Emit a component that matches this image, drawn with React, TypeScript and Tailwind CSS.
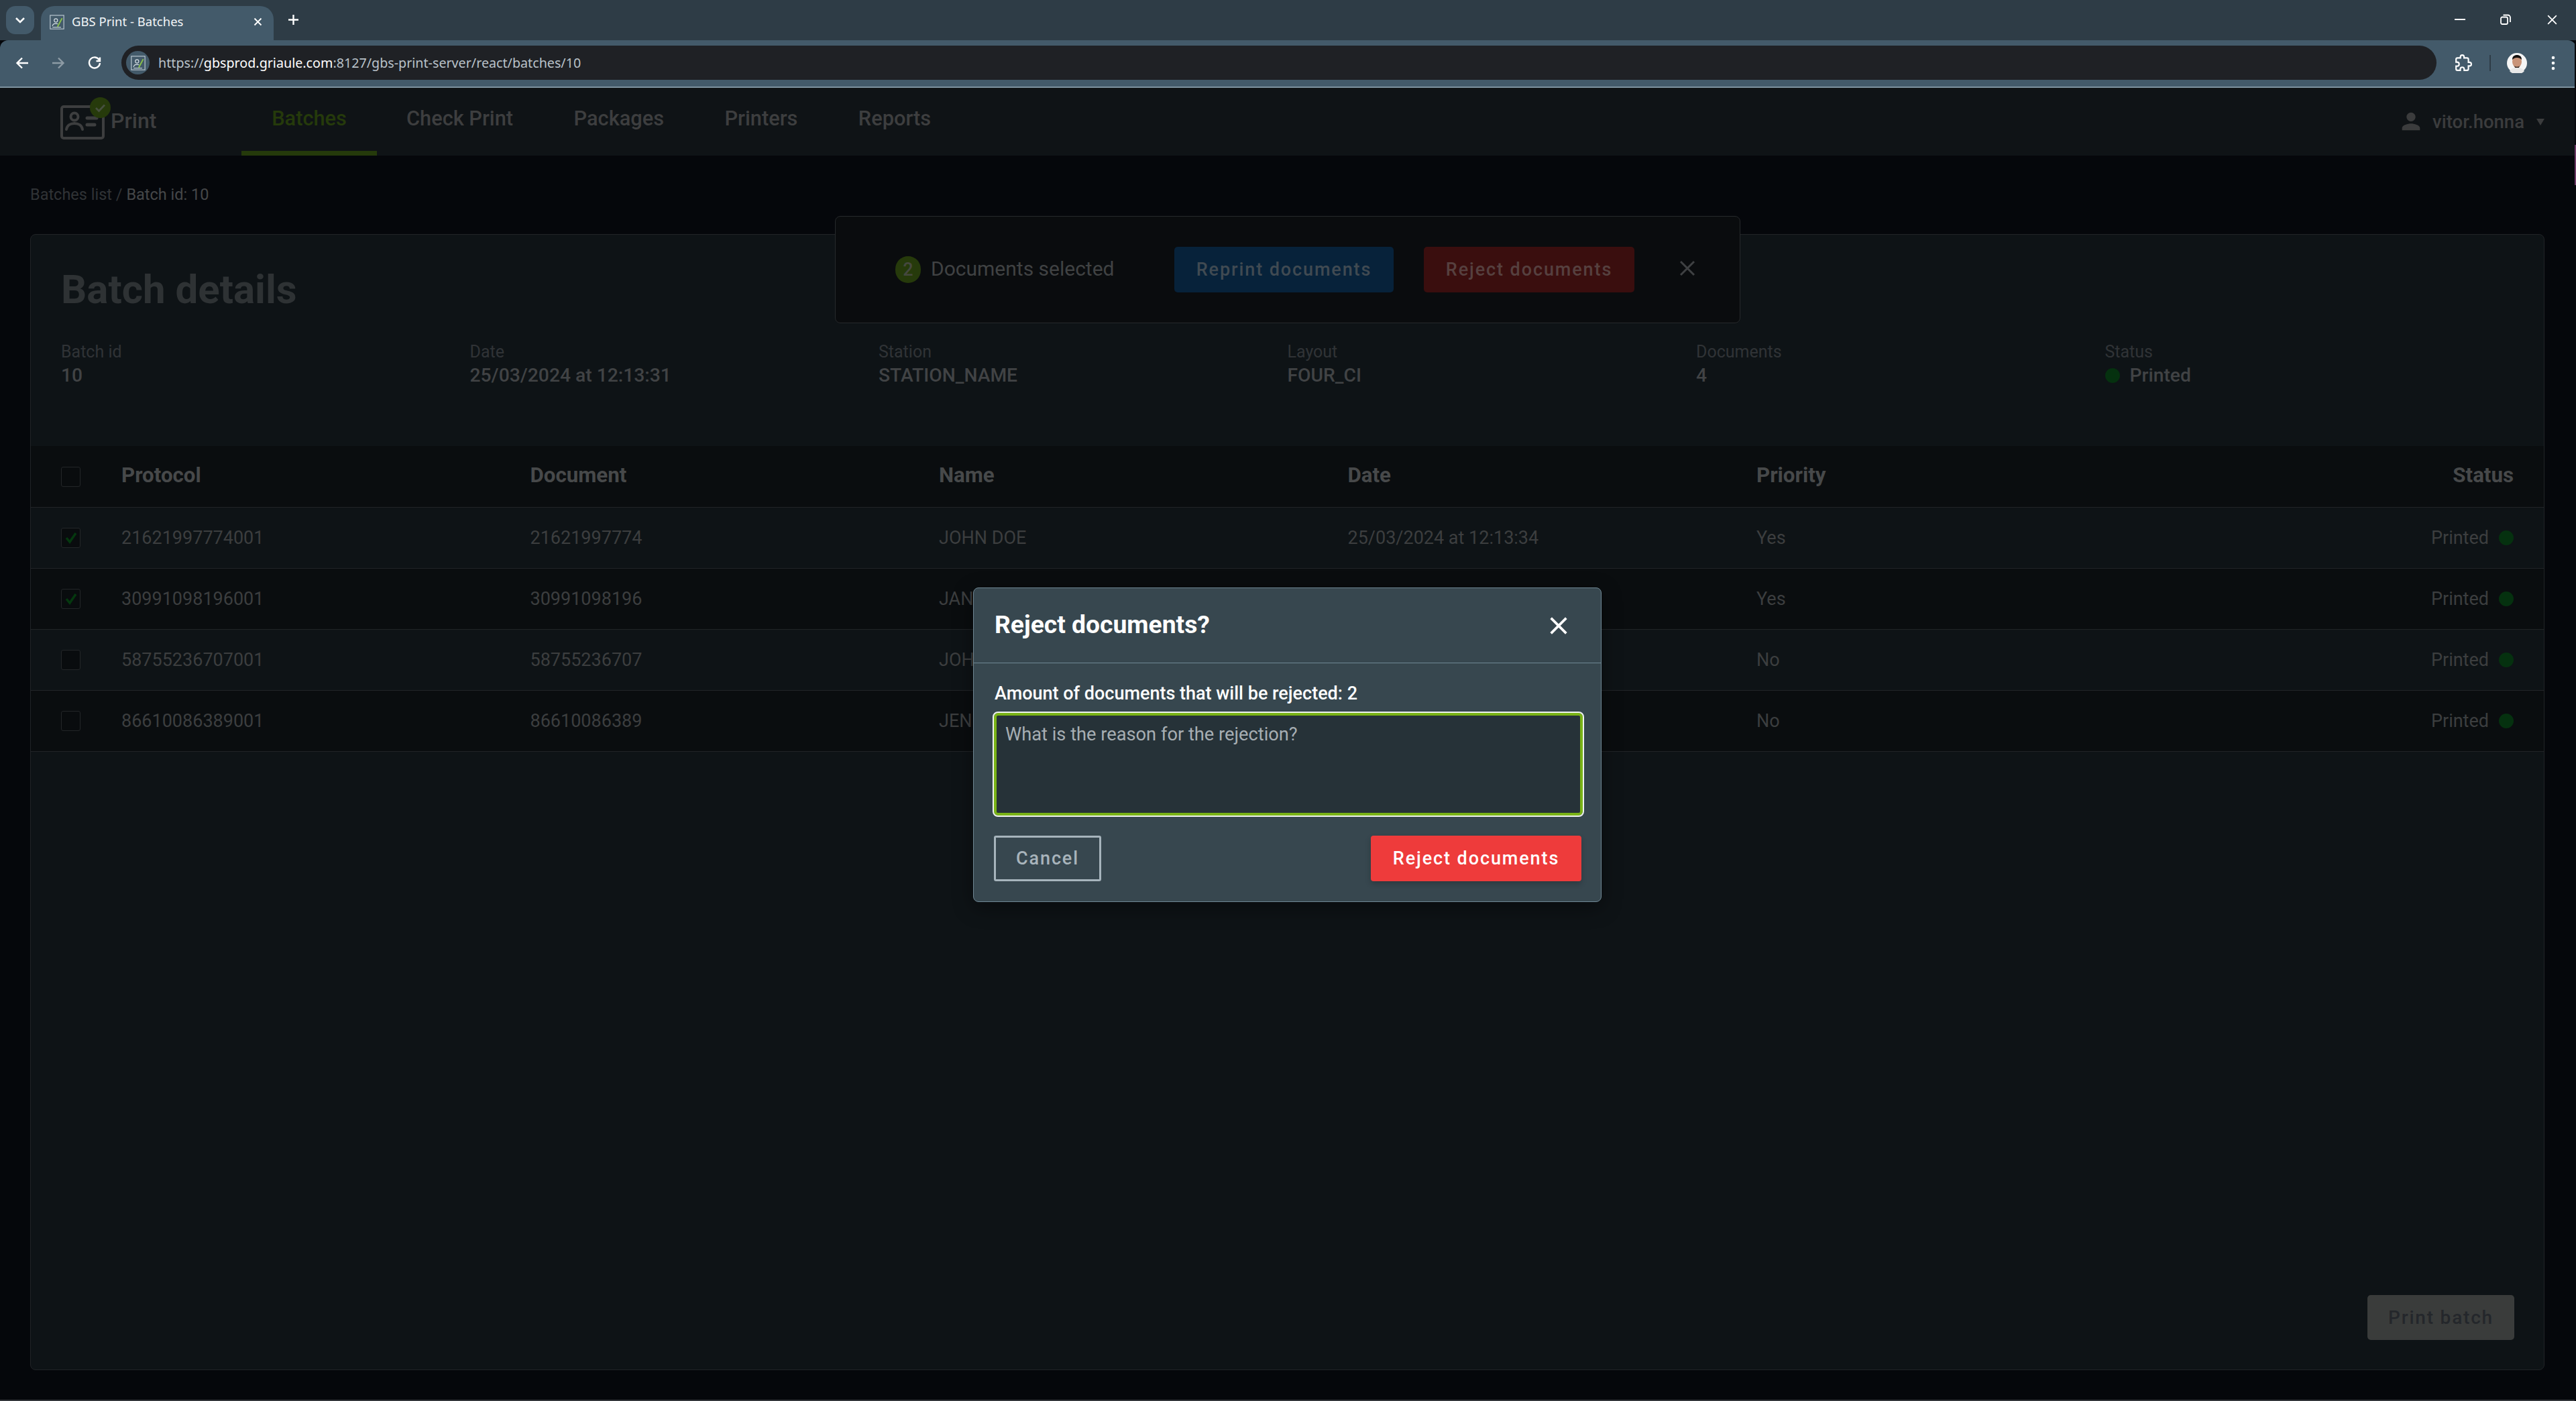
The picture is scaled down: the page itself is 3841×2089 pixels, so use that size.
import React from "react";

const Favicon = ({ size = 26 }: { size?: number }) => (
  <svg width={size} height={size} viewBox="0 0 26 26" fill="none">
    <rect x="1" y="1" width="24" height="24" stroke="#b9c6cf" strokeWidth="1.4" />
    <circle cx="11" cy="10" r="3" stroke="#d7e0e6" strokeWidth="1.4" />
    <path d="M5 20c.5-3.5 3-4.5 6-4.5 1.500 0 2.500.3 3.500.8" stroke="#d7e0e6" strokeWidth="1.4" />
    <path d="M14 21L22 6" stroke="#8bc34a" strokeWidth="2.2" />
    <path d="M5 22h15" stroke="#d7e0e6" strokeWidth="1.2" />
  </svg>
);

const CloseIcon = ({ size, color, sw = 2 }: { size: number; color: string; sw?: number }) => (
  <svg width={size} height={size} viewBox="0 0 24 24" fill="none" stroke={color} strokeWidth={sw}>
    <path d="M4 4L20 20M20 4L4 20" />
  </svg>
);

const Logo = () => (
  <div className="relative w-[66px] h-[66px]">
    <svg width="66" height="51" viewBox="0 0 66 51" fill="none" className="absolute left-0 top-[12px]">
      <rect x="2" y="2" width="62" height="47" rx="3" stroke="#3d3e3f" strokeWidth="4" />
      <circle cx="21" cy="17" r="5.500" stroke="#3d3e3f" strokeWidth="4" />
      <path d="M9 36c1-6 6-9 12-9s11 3 12 9" stroke="#3d3e3f" strokeWidth="4" strokeLinecap="round" />
      <path d="M40 19h14M40 29h11" stroke="#3d3e3f" strokeWidth="5" strokeLinecap="round" />
    </svg>
    <div className="absolute left-[44px] top-0 w-[31px] h-[31px] rounded-full bg-[#263a0b] flex items-center justify-center">
      <svg width="17" height="14" viewBox="0 0 17 14" fill="none" stroke="#47503f" strokeWidth="2.800">
        <path d="M2 7l4.500 4.500L15 2.500" />
      </svg>
    </div>
  </div>
);

const Dot = () => <span className="block w-[22px] h-[22px] rounded-full bg-[#05310f]" />;

const Check = ({ on }: { on?: boolean }) => (
  <div className="w-[29px] h-[30px] rounded-[3px] border border-[#232628] bg-[#090c0e] flex items-center justify-center">
    {on && (
      <svg width="20" height="18" viewBox="0 0 20 18" fill="none" stroke="#05380f" strokeWidth="3.500">
        <path d="M3 9l5 6L17 2" />
      </svg>
    )}
  </div>
);

const meta = [
  ["Batch id", "10"],
  ["Date", "25/03/2024 at 12:13:31"],
  ["Station", "STATION_NAME"],
  ["Layout", "FOUR_CI"],
  ["Documents", "4"],
];

const rows = [
  ["21621997774001", "21621997774", "JOHN DOE", "25/03/2024 at 12:13:34", "Yes", true],
  ["30991098196001", "30991098196", "JANE DOE", "25/03/2024 at 12:13:34", "Yes", true],
  ["58755236707001", "58755236707", "JOHN SMITH", "25/03/2024 at 12:13:34", "No", false],
  ["86610086389001", "86610086389", "JENNIFER DOE", "25/03/2024 at 12:13:34", "No", false],
] as const;

const tableCols = "grid grid-cols-[repeat(5,609.5px)_1fr] items-center flex-1";

export default function App() {
  return (
    <div className="relative w-[3841px] h-[2089px] overflow-hidden bg-[#05070b] font-['Roboto',sans-serif] flex flex-col">
      {/* Browser tab strip */}
      <div className="h-[60px] bg-[#2e3c46] flex items-end relative shrink-0">
        <div className="absolute left-[9px] top-[9px] w-[42px] h-[42px] rounded-[14px] bg-[#435a6a] flex items-center justify-center">
          <svg width="16" height="11" viewBox="0 0 16 11" fill="none" stroke="#fff" strokeWidth="2.600">
            <path d="M2 2l6 6 6-6" />
          </svg>
        </div>
        <div className="ml-[61px] w-[347px] h-[51px] bg-[#435a6a] rounded-t-[20px] flex items-center pl-[13px] pr-[16px] pb-[4px]">
          <Favicon size={22} />
          <span className="ml-[11px] text-[18.500px] text-[#f2f5f7] font-['Noto_Sans',sans-serif] leading-none flex-1 whitespace-nowrap">
            GBS Print - Batches
          </span>
          <CloseIcon size={15} color="#ffffff" sw={3} />
        </div>
        <div className="ml-[18px] self-center mt-[-1px] w-[22px] h-[22px] flex items-center justify-center">
          <svg width="17" height="17" viewBox="0 0 17 17" stroke="#fff" strokeWidth="2.400">
            <path d="M8.500 1v15M1 8.500h15" />
          </svg>
        </div>
        <div className="ml-auto mr-[26px] self-center flex items-center gap-[52px] mt-[-2px]">
          <span className="block w-[16px] h-[2.500px] bg-white" />
          <svg width="16" height="16" viewBox="0 0 16 16" fill="none" stroke="#fff" strokeWidth="1.800">
            <rect x="1" y="4.500" width="10" height="10.500" rx="2" />
            <path d="M4.500 1.500h7a3.500 3.500 0 0 1 3.500 3.500v7" />
          </svg>
          <CloseIcon size={19} color="#ffffff" sw={2.200} />
        </div>
      </div>

      {/* Browser toolbar */}
      <div className="h-[69px] bg-[#435a6a] rounded-t-[12px] flex items-center shrink-0 relative pb-[1px]">
        <div className="flex items-center ml-[23px] gap-[34px] w-[158px]">
          <svg width="20" height="20" viewBox="0 0 20 20" fill="none" stroke="#fff" strokeWidth="2.400">
            <path d="M19 10H3M10 2.500L2.500 10l7.500 7.500" />
          </svg>
          <svg width="20" height="20" viewBox="0 0 20 20" fill="none" stroke="#8d9ba5" strokeWidth="2.400">
            <path d="M1 10h16M10 2.500L17.500 10 10 17.500" />
          </svg>
          <svg width="20" height="20" viewBox="0 0 20 20" fill="none" stroke="#fff" strokeWidth="2.400">
            <path d="M17 5.500A8 8 0 1 0 18 10" />
            <path d="M18 1.500V7h-5.500" />
          </svg>
        </div>
        <div className="w-[3452px] h-[51px] rounded-full bg-[#1f2125] flex items-center pl-[7px] mt-[-1px]">
          <div className="w-[35px] h-[35px] rounded-full bg-[#435a6a] flex items-center justify-center">
            <Favicon size={22} />
          </div>
          <span className="ml-[13px] text-[19.700px] leading-none text-[#b9c2c9] font-['Noto_Sans',sans-serif] whitespace-nowrap">
            https://<span className="text-white">gbsprod.griaule.com</span>:8127/gbs-print-server/react/batches/10
          </span>
        </div>
        <div className="ml-[27px]">
          <svg width="26" height="26" viewBox="0 0 24 24" fill="none" stroke="#fff" strokeWidth="2">
            <path d="M20.500 11H19V7c0-1.100-.9-2-2-2h-4V3.500C13 2.120 11.880 1 10.500 1S8 2.120 8 3.500V5H4c-1.100 0-1.990.9-1.990 2v3.800H3.500c1.490 0 2.700 1.210 2.700 2.700s-1.210 2.700-2.700 2.700H2V20c0 1.100.9 2 2 2h3.800v-1.500c0-1.490 1.210-2.700 2.700-2.700 1.490 0 2.700 1.210 2.700 2.700V22H17c1.100 0 2-.9 2-2v-4h1.500c1.380 0 2.500-1.120 2.500-2.500S21.880 11 20.500 11z" />
          </svg>
        </div>
        <span className="block ml-[26px] w-[2px] h-[24px] bg-[#2e3c46]" />
        <svg width="30" height="30" viewBox="0 0 30 30" className="ml-[24px]">
          <circle cx="15" cy="15" r="15" fill="#f5f5f5" />
          <ellipse cx="15" cy="13" rx="7" ry="9" fill="#c99479" />
          <path d="M8 10c0-5 3-7 7-7s7 2 7 7c-2-2-4-3-7-3s-5 1-7 3z" fill="#14100e" />
          <path d="M11 19c2 2 6 2 8 0l-1 3h-6z" fill="#3a2c26" />
          <path d="M4 27c3-4 6-5 11-5s8 1 11 5a15 15 0 0 1-22 0z" fill="#e8e8e8" />
        </svg>
        <svg width="6" height="22" viewBox="0 0 6 22" className="ml-[36px]" fill="#fff">
          <circle cx="3" cy="3" r="2.300" />
          <circle cx="3" cy="11" r="2.300" />
          <circle cx="3" cy="19" r="2.300" />
        </svg>
      </div>
      <div className="h-[2px] bg-[#7e929f] shrink-0" />

      {/* App header */}
      <div className="h-[101px] bg-[#0f1316] flex items-stretch shrink-0">
        <div className="w-[360px] pl-[90px] flex items-start pt-[14px]">
          <Logo />
          <span className="ml-[9px] mt-[15px] text-[32px] leading-[40px] font-medium text-[#3d3e3f]">Print</span>
        </div>
        <div className="w-[202px] border-b-[7px] border-[#253a0b] flex items-center justify-center">
          <span className="text-[30.750px] font-medium text-[#253a0b] mt-[-2px]">Batches</span>
        </div>
        <div className="flex items-center pl-[44px] gap-[90.500px] flex-1 pb-[8px]">
          <span className="text-[30.750px] font-medium text-[#3d3e3f]">Check Print</span>
          <span className="text-[30.750px] font-medium text-[#3d3e3f]">Packages</span>
          <span className="text-[30.750px] font-medium text-[#3d3e3f]">Printers</span>
          <span className="text-[30.750px] font-medium text-[#3d3e3f]">Reports</span>
        </div>
        <div className="flex items-center pr-[47px]">
          <svg width="40" height="40" viewBox="0 0 24 24" fill="#3b3c3d" className="mr-[12px] mt-[-2px]">
            <path d="M12 12c2.210 0 4-1.790 4-4s-1.790-4-4-4-4 1.790-4 4 1.790 4 4 4zm0 2c-2.670 0-8 1.340-8 4v2h16v-2c0-2.660-5.330-4-8-4z" />
          </svg>
          <span className="text-[27.500px] font-medium text-[#3b3c3d]">vitor.honna</span>
          <svg width="12" height="10" viewBox="0 0 12 10" className="ml-[18px]" fill="#3b3c3d">
            <path d="M0 0h12L6 10z" />
          </svg>
        </div>
      </div>

      {/* Page body */}
      <div className="flex-1 flex flex-col px-[45px] pr-[47px] min-h-0 border-b-[2px] border-[#33363a]">
        <div className="h-[117px] flex items-center text-[23.500px] leading-none shrink-0">
          <span className="text-[#303336]">Batches list /&nbsp;</span>
          <span className="text-[#454749]">Batch id: 10</span>
        </div>

        <div className="h-[1694px] shrink-0 bg-[#0e1316] border border-[#212427] rounded-[8px] flex flex-col relative">
          <div className="h-[315px] px-[45px] pt-[47px] shrink-0">
            <h1 className="text-[60px] leading-[70px] font-bold text-[#2e3234]">Batch details</h1>
            <div className="grid grid-cols-6 mt-[43px]">
              {meta.map(([l, v]) => (
                <div key={l} className="flex flex-col">
                  <span className="text-[25px] leading-[30px] text-[#303336]">{l}</span>
                  <span className="text-[28.250px] leading-[36px] mt-[2px] font-medium text-[#414345]">{v}</span>
                </div>
              ))}
              <div className="flex flex-col">
                <span className="text-[25px] leading-[30px] text-[#303336]">Status</span>
                <span className="text-[28.250px] leading-[36px] mt-[2px] font-medium text-[#414345] flex items-center gap-[15px]">
                  <Dot />
                  Printed
                </span>
              </div>
            </div>
          </div>

          {/* Table */}
          <div className="h-[92px] bg-[#0a0d0f] border-b border-[#212427] flex items-center pl-[45px] pr-[45px] shrink-0">
            <div className="w-[90px] shrink-0"><Check /></div>
            <div className={tableCols}>
              {["Protocol", "Document", "Name", "Date", "Priority"].map((h) => (
                <span key={h} className="text-[31.250px] font-bold text-[#47494a] leading-none pb-[3px]">{h}</span>
              ))}
              <span className="text-[31.250px] font-bold text-[#47494a] leading-none text-right pb-[3px]">Status</span>
            </div>
          </div>
          {rows.map((r, i) => (
            <div
              key={r[0]}
              className={
                "h-[91px] border-b border-[#212427] flex items-center pl-[45px] pr-[45px] shrink-0 " +
                (i % 2 === 0 ? "bg-[#0e1316]" : "bg-[#0a0d0f]")
              }
            >
              <div className="w-[90px] shrink-0"><Check on={r[5]} /></div>
              <div className={tableCols}>
                {[r[0], r[1], r[2], r[3], r[4]].map((c, j) => (
                  <span key={j} className="text-[27px] text-[#3c3e3f] leading-none">{c as string}</span>
                ))}
                <span className="text-[27px] text-[#3c3e3f] leading-none flex items-center justify-end gap-[15px]">
                  Printed
                  <Dot />
                </span>
              </div>
            </div>
          ))}

          <div className="flex-1 flex items-end justify-end pr-[44px] pb-[44px]">
            <div className="w-[219px] h-[67px] rounded-[5px] bg-[#3a3c3b] flex items-center justify-center text-[28px] font-medium tracking-[1.800px] text-[#24272b]">
              Print batch
            </div>
          </div>
        </div>
      </div>

      {/* Scrollbar sliver */}
      <div className="absolute right-0 top-[60px] w-[2px] h-[2029px] bg-[#07080c]">
        <div className="mt-[156px] h-[60px] bg-[#6e3a66]" />
      </div>

      {/* Selection toast */}
      <div className="absolute left-[1245px] top-[322px] w-[1350px] h-[160px] bg-[#0a0c0e] border border-[#26292b] rounded-[8px] flex items-center pl-[89px]">
        <div className="w-[38px] h-[40px] rounded-full bg-[#263a0b] flex items-center justify-center text-[27px] font-medium text-[#45483f] mr-[15px]">2</div>
        <span className="text-[30px] text-[#404243] w-[363px] mt-[-4px]">Documents selected</span>
        <div className="w-[327px] h-[68px] rounded-[5px] bg-[#07223a] flex items-center justify-center text-[27px] font-medium tracking-[1.900px] text-[#404a52]">Reprint documents</div>
        <div className="ml-[45px] w-[314px] h-[68px] rounded-[5px] bg-[#3a0e0e] flex items-center justify-center text-[27px] font-medium tracking-[1.900px] text-[#56403f]">Reject documents</div>
        <div className="ml-[64px] mt-[-4px]"><CloseIcon size={30} color="#3f4143" sw={2.400} /></div>
      </div>

      {/* Dialog */}
      <div className="absolute left-[1451px] top-[876px] w-[937px] h-[469px] bg-[#37474f] border border-[#6f8794] rounded-[8px] flex flex-col shadow-[0_8px_30px_rgba(0,0,0,0.4)]">
        <div className="h-[112px] border-b border-[#6f8794] flex items-center justify-between pl-[31px] pr-[46px] shrink-0">
          <span className="text-[37.250px] font-bold text-white leading-none mt-[-2px]">Reject documents?</span>
          <CloseIcon size={34} color="#ffffff" sw={2.600} />
        </div>
        <div className="flex flex-col px-[31px] pt-[32px]">
          <span className="text-[27px] font-medium text-white leading-none">Amount of documents that will be rejected: 2</span>
          <textarea
            readOnly
            placeholder="What is the reason for the rejection?"
            className="mt-[15px] ml-[-1px] w-[878px] h-[153px] bg-[#263238] border-[4px] border-[#7ab317] outline outline-[2px] outline-[#eef2ef] rounded-[6px] pl-[13px] pt-[12px] text-[27.250px] leading-[32px] font-normal resize-none placeholder:text-[#a6aeb3] box-border"
          />
          <div className="flex justify-between items-center mt-[30px]">
            <div className="w-[160px] h-[68px] border-[3px] border-[#a6b4bc] rounded-[3px] flex items-center justify-center text-[27px] font-medium tracking-[1.900px] text-[#a8b4bb] ml-[-1px]">Cancel</div>
            <div className="w-[314px] h-[68px] rounded-[4px] bg-[#ee3b3b] flex items-center justify-center text-[27px] font-medium tracking-[1.900px] text-white shadow-[0_4px_8px_rgba(0,0,0,0.2)] mr-[-2px]">Reject documents</div>
          </div>
        </div>
      </div>
    </div>
  );
}
